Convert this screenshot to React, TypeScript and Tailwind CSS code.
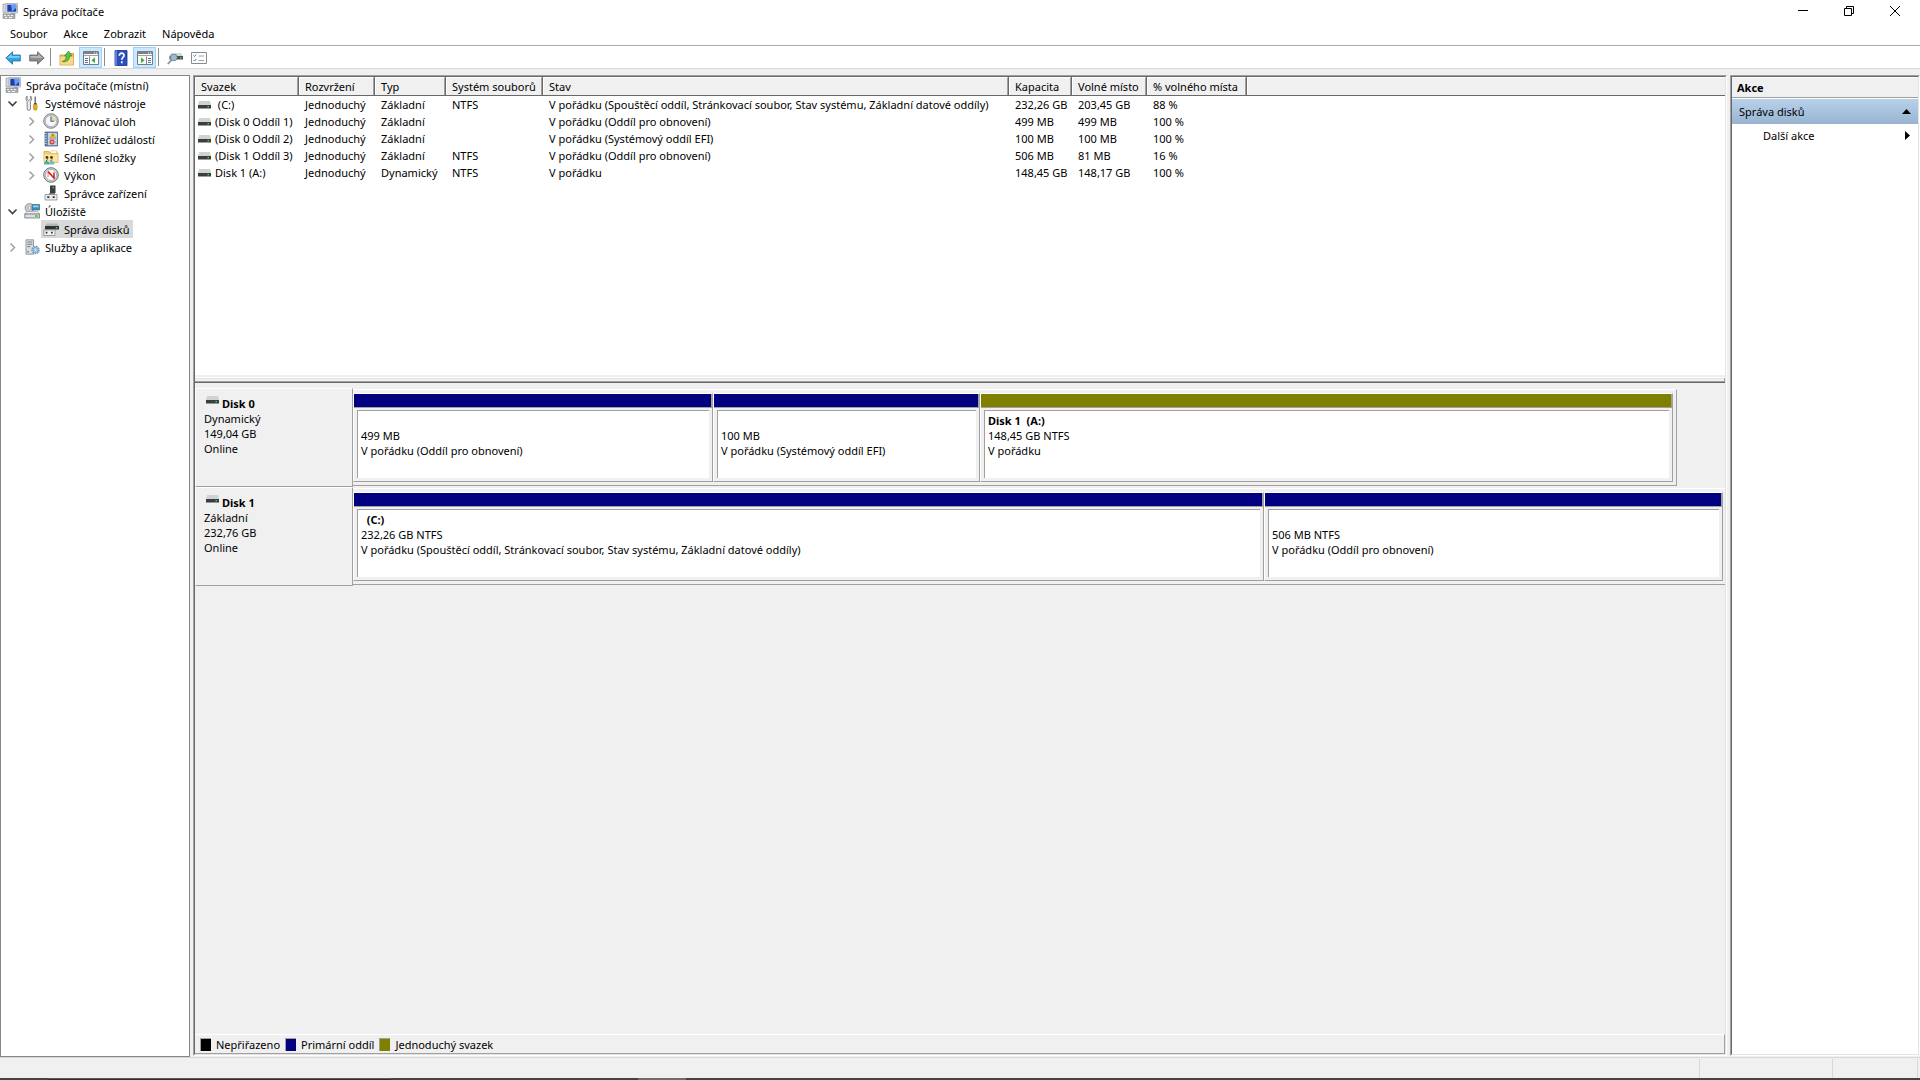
import type { ReactNode } from "react";

type IconProps = { className?: string };

const Svg = ({ children, className = "size-4" }: { children: ReactNode; className?: string }) => (
  <svg viewBox="0 0 16 16" className={`shrink-0 ${className}`} aria-hidden="true">
    {children}
  </svg>
);

const ComputerIcon = ({ className }: IconProps) => (
  <Svg className={className}>
    <path d="M1 1h3.500v9H1z" fill="#d5d8db" stroke="#8d9297" strokeWidth=".6" />
    <path d="M4 .5h11.500v9.500H4z" fill="#dfe3e6" stroke="#9aa0a6" strokeWidth=".7" />
    <path d="M5.300 1.700h9v7h-9z" fill="#1b3fae" />
    <path d="M9 1.700h5.300v3L10 8.700z" fill="#6c9bee" />
    <path d="M9 10h4v1.200H9z" fill="#a4a9ad" />
    <path d="M1 11h12v4.500H1z" fill="#a6abaf" stroke="#7d8387" strokeWidth=".5" />
    <path d="M2 12h2v1H2zM5.500 12h2v1h-2zM9 12h2v1H9zM3 14h2v1H3zM7 14h3v1H7z" fill="#f4f5f6" />
  </Svg>
);

const ToolsIcon = ({ className }: IconProps) => (
  <Svg className={className}>
    <path d="M3.200 1v3.200L4.800 5.500 6.400 4.200V1C8 1.900 8.300 4.800 6.500 6.400V14c0 1.800-3.400 1.800-3.400 0V6.400C1.200 4.800 1.600 1.900 3.200 1z" fill="#e4e6e8" stroke="#6f757a" strokeWidth=".8" />
    <path d="M10.500 1.500h1.500V8h-1.500z" fill="#73787c" />
    <path d="M10 8h2.600v1.600H10z" fill="#44484b" />
    <path d="M9.600 9.500h3.400V14c0 1.600-3.400 1.600-3.400 0z" fill="#f0b016" stroke="#ad7707" strokeWidth=".6" />
  </Svg>
);

const ClockIcon = ({ className }: IconProps) => (
  <Svg className={className}>
    <circle cx="8" cy="8" r="7.300" fill="#c7cacd" stroke="#777c80" strokeWidth=".9" />
    <circle cx="8" cy="8" r="5.600" fill="#f4f8fc" stroke="#8c9196" strokeWidth=".5" />
    <path d="M8 8V2.600a5.400 5.400 0 0 1 5.400 5.400z" fill="#eed9a6" />
    <path d="M8 3.600V8.300h3.300" fill="none" stroke="#38638f" strokeWidth="1.100" />
  </Svg>
);

const EventIcon = ({ className }: IconProps) => (
  <Svg className={className}>
    <path d="M2 1h12.500v14H2z" fill="#6484ab" stroke="#3c5675" strokeWidth=".7" />
    <path d="M5 1.800h9v12.400H5z" fill="#c4d3e6" />
    <path d="M1 2.500h2.500M1 5h2.500M1 7.500h2.500M1 10h2.500M1 12.500h2.500" stroke="#c8ced4" strokeWidth="1" />
    <path d="M9.800 2l2.900 5H6.900z" fill="#fbc61a" stroke="#b98a05" strokeWidth=".5" />
    <path d="M9.800 3.700v1.800" stroke="#4d3b05" strokeWidth=".8" />
    <circle cx="9" cy="11" r="2.500" fill="#d7423c" />
    <path d="M7.800 11h2.400" stroke="#fff" strokeWidth="1" />
    <path d="M5.500 8h8M11.800 11h2" stroke="#7593bb" strokeWidth=".6" />
  </Svg>
);

const FolderUsersIcon = ({ className }: IconProps) => (
  <Svg className={className}>
    <path d="M1 2.500h5l1 1.500h8v9.500H1z" fill="#f4cf6c" stroke="#c89b34" strokeWidth=".7" />
    <path d="M8 1.800h5.500V4.500H8z" fill="#fff" stroke="#d3b05a" strokeWidth=".5" />
    <path d="M1.300 5.500h13.500v7.800H1.300z" fill="#fbe39b" />
    <circle cx="4" cy="8.500" r="1.400" fill="#4a3728" />
    <circle cx="8.500" cy="8.500" r="1.400" fill="#4a3728" />
    <path d="M4.500 10.500L3 12M9 10.500L7.500 12" stroke="#4a3728" strokeWidth="1" />
    <path d="M1 15.500c0-5 5.500-5 5.500 0z" fill="#48b5a0" />
    <path d="M6 15.500c0-5 5.500-5 5.500 0z" fill="#6fb9dc" />
  </Svg>
);

const PerfIcon = ({ className }: IconProps) => (
  <Svg className={className}>
    <circle cx="8" cy="8" r="7.300" fill="#d4d7d9" stroke="#6c7175" strokeWidth="1" />
    <circle cx="8" cy="8" r="5.500" fill="#fff" stroke="#85898d" strokeWidth=".6" />
    <path d="M5 10V5.500L7.500 8" fill="none" stroke="#e07b7b" strokeWidth="1" />
    <path d="M5 4.500l6 6.500V5.500" fill="none" stroke="#cf1b1b" strokeWidth="1.500" />
  </Svg>
);

const DeviceIcon = ({ className }: IconProps) => (
  <Svg className={className}>
    <path d="M7 .5h5.500V8H7z" fill="#3b3e41" />
    <path d="M9.500 2H11v1.300H9.500z" fill="#3fdc3f" />
    <path d="M6 8h6v2H6z" fill="#777c80" />
    <path d="M2 9.500h12V15H2z" fill="#e9ebec" stroke="#888d91" strokeWidth=".8" />
    <path d="M4.300 11.300h2v1.700h-2zM9.700 11.300h2v1.700h-2z" fill="#2e3134" />
  </Svg>
);

const StorageIcon = ({ className }: IconProps) => (
  <Svg className={className}>
    <circle cx="5.500" cy="5" r="4.500" fill="#c8ccd0" stroke="#7e8387" strokeWidth=".7" />
    <circle cx="5.500" cy="5" r="1.400" fill="#fff" stroke="#7e8387" strokeWidth=".6" />
    <path d="M8 1.500h7.500V7H8z" fill="#2b93cc" stroke="#53606a" strokeWidth=".7" />
    <path d="M9 2.500h5.500v1.800H9z" fill="#8fd4f2" />
    <path d="M2.500 8.500h11l2 2.500H.8z" fill="#eef0f1" stroke="#8c9195" strokeWidth=".6" />
    <path d="M.8 11h14.700v4H.8z" fill="#dadddf" stroke="#5f6468" strokeWidth=".7" />
    <path d="M11 12.300h3v1.400h-3z" fill="#33c433" />
  </Svg>
);

const DiskMgmtIcon = ({ className }: IconProps) => (
  <Svg className={className}>
    <path d="M3.500 2.500h11L16 5H2z" fill="#b4b8bb" />
    <path d="M2 5h14v3.500H2z" fill="#303336" />
    <path d="M12.800 6h1.600v1.400h-1.600z" fill="#3fdc3f" />
    <path d="M.8 9H12v5.500H.8z" fill="#f1f2f3" stroke="#888d91" strokeWidth=".8" />
    <path d="M2.700 10.700h1.700v1.800H2.700zM8 10.700h1.700v1.800H8z" fill="#2e3134" />
  </Svg>
);

const ServicesIcon = ({ className }: IconProps) => (
  <Svg className={className}>
    <path d="M2 .8h7.500v14.400H2z" fill="#d9dee2" stroke="#7d858c" strokeWidth=".8" />
    <path d="M3.300 3h5M3.300 5.300h5M3.300 7.600h3" stroke="#727a81" strokeWidth="1" />
    <path d="M3.300 12h1.500v1.500H3.300z" fill="#3fae3f" />
    <circle cx="11.500" cy="11" r="3.400" fill="#dcebf7" stroke="#6d9cc4" strokeWidth="1.700" strokeDasharray="1.600 .7" />
    <circle cx="11.500" cy="11" r="2.500" fill="#c7dff2" stroke="#5f8fb8" strokeWidth=".7" />
    <circle cx="11.500" cy="11" r="1" fill="#fff" stroke="#5f8fb8" strokeWidth=".5" />
  </Svg>
);

const DriveIcon = () => (
  <svg viewBox="0 0 13 8" className="h-2 w-[13px] shrink-0" aria-hidden="true">
    <path d="M1 0h11l1 4H0z" fill="#d0d3d6" />
    <path d="M0 4h13v3.500H0z" fill="#3b3d3f" />
    <path d="M9.500 5H11v1.300H9.500z" fill="#2fe62f" />
  </svg>
);

const BackIcon = () => (
  <Svg>
    <path d="M.8 8L7.500 1.800V5H15.300v6H7.500v3.200z" fill="#2fa3e6" stroke="#1b6da5" strokeWidth=".8" />
    <path d="M2.300 8L6.700 4v2h7.800v1.700z" fill="#83cdf5" />
  </Svg>
);
const ForwardIcon = () => (
  <Svg>
    <path d="M15.200 8L8.500 1.800V5H.7v6h7.800v3.200z" fill="#8d8d8d" stroke="#5f5f5f" strokeWidth=".8" />
    <path d="M13.700 8L9.300 4v2H1.500v1.700z" fill="#b9b9b9" />
  </Svg>
);
const UpFolderIcon = () => (
  <Svg>
    <path d="M1 5h5.500l1-1.500h7V15H1z" fill="#f0c35c" stroke="#b58a2b" strokeWidth=".7" />
    <path d="M1.300 7h13v7.700h-13z" fill="#f8d985" />
    <path d="M3 11.500c3-.8 4.300-2.800 4.300-5.500H5.500L9.500 1 13 6h-2.300c0 4-3 6.500-7.700 5.500z" fill="#5cc04a" stroke="#2c7d20" strokeWidth=".6" />
  </Svg>
);
const PaneIcon = ({ flip }: { flip?: boolean }) => (
  <Svg>
    <path d="M.5 1.500h15v13H.5z" fill="#fbfbfb" stroke="#7a7d80" />
    <path d="M1 2h14v2H1z" fill="#7d8185" />
    <path d="M11 2.500h1v1h-1zM13 2.500h1v1h-1z" fill="#fff" />
    <path d="M1 5h14v1H1z" fill="#9fa3a6" />
    <g transform={flip ? "matrix(-1 0 0 1 16 0)" : undefined}>
      <path d="M6.500 6.500V14" stroke="#85898d" />
      <path d="M2 8.500h3M2 10.500h3M2 12.500h3" stroke="#55718f" />
      <path d="M12 7.500v5.400L8.500 10.200z" fill="#2fae2f" />
    </g>
  </Svg>
);
const HelpIcon = () => (
  <Svg>
    <path d="M2 .5h12v15H2z" fill="#2b50bd" stroke="#173183" strokeWidth=".8" />
    <path d="M2 .5h2v15H2z" fill="#5b7ee0" />
    <path d="M6.300 5.800c0-3.600 4.800-3.300 4.700-.3 0 2-2.200 2-2.200 4.200M8.800 11.300v1.900" fill="none" stroke="#fff" strokeWidth="1.700" />
  </Svg>
);
const RescanIcon = () => (
  <Svg>
    <path d="M4 3h10L16 6H2z" fill="#d3d6d8" />
    <path d="M2.500 6H16v3.500H2.500z" fill="#4a4d50" />
    <path d="M13 7h1.500v1.500H13z" fill="#35de35" />
    <path d="M5 9.500L.8 14" stroke="#8b9095" strokeWidth="1.800" />
    <circle cx="6.800" cy="7.500" r="3.300" fill="#9dbbd3" stroke="#71828f" strokeWidth=".9" />
  </Svg>
);
const ListIcon = () => (
  <Svg>
    <path d="M.5 2.500h15v11H.5z" fill="#fdfdfd" stroke="#8a8d90" />
    <path d="M2.500 5.500l1 1 1.700-2M2.500 10l1 1 1.700-2" fill="none" stroke="#3974b8" strokeWidth=".9" />
    <path d="M7.500 6H13M7.500 10.500H13" stroke="#a0a4a8" />
  </Svg>
);

type TreeItem = {
  label: string;
  level: number;
  icon: (p: IconProps) => ReactNode;
  state?: "open" | "closed";
  selected?: boolean;
};

const tree: TreeItem[] = [
  { label: "Správa počítače (místní)", level: 0, icon: ComputerIcon },
  { label: "Systémové nástroje", level: 1, icon: ToolsIcon, state: "open" },
  { label: "Plánovač úloh", level: 2, icon: ClockIcon, state: "closed" },
  { label: "Prohlížeč událostí", level: 2, icon: EventIcon, state: "closed" },
  { label: "Sdílené složky", level: 2, icon: FolderUsersIcon, state: "closed" },
  { label: "Výkon", level: 2, icon: PerfIcon, state: "closed" },
  { label: "Správce zařízení", level: 2, icon: DeviceIcon },
  { label: "Úložiště", level: 1, icon: StorageIcon, state: "open" },
  { label: "Správa disků", level: 2, icon: DiskMgmtIcon, selected: true },
  { label: "Služby a aplikace", level: 1, icon: ServicesIcon, state: "closed" },
];

const indents = ["pl-[2px]", "pl-[3px]", "pl-[22px]"];

const Chevron = ({ state }: { state?: "open" | "closed" }) => (
  <svg viewBox="0 0 16 16" className="size-4 shrink-0" fill="none" aria-hidden="true">
    {state === "open" && <path d="M4.500 6.500l4 4 4-4" stroke="#404040" strokeWidth="1.600" />}
    {state === "closed" && <path d="M6.500 4.500l4 4-4 4" stroke="#a0a0a0" strokeWidth="1.500" />}
  </svg>
);

const columns = [
  { label: "Svazek", width: "w-[104px]" },
  { label: "Rozvržení", width: "w-[76px]" },
  { label: "Typ", width: "w-[71px]" },
  { label: "Systém souborů", width: "w-[97px]" },
  { label: "Stav", width: "w-[466px]" },
  { label: "Kapacita", width: "w-[63px]" },
  { label: "Volné místo", width: "w-[75px]" },
  { label: "% volného místa", width: "w-[100px]" },
];

const longState = "V pořádku (Spouštěcí oddíl, Stránkovací soubor, Stav systému, Základní datové oddíly)";

const volumes = [
  ["\u00a0(C:)", "Jednoduchý", "Základní", "NTFS", longState, "232,26 GB", "203,45 GB", "88 %"],
  ["(Disk 0 Oddíl 1)", "Jednoduchý", "Základní", "", "V pořádku (Oddíl pro obnovení)", "499 MB", "499 MB", "100 %"],
  ["(Disk 0 Oddíl 2)", "Jednoduchý", "Základní", "", "V pořádku (Systémový oddíl EFI)", "100 MB", "100 MB", "100 %"],
  ["(Disk 1 Oddíl 3)", "Jednoduchý", "Základní", "NTFS", "V pořádku (Oddíl pro obnovení)", "506 MB", "81 MB", "16 %"],
  ["Disk 1 (A:)", "Jednoduchý", "Dynamický", "NTFS", "V pořádku", "148,45 GB", "148,17 GB", "100 %"],
];

type Partition = { title: string; size: string; state: string; bar: string; grow: string };
type Disk = { name: string; kind: string; size: string; frame: string; parts: Partition[] };

const disks: Disk[] = [
  {
    name: "Disk 0",
    kind: "Dynamický",
    size: "149,04 GB",
    frame: "mr-12 border-r border-r-[#a0a0a0] pr-[3px]",
    parts: [
      { title: "", size: "499 MB", state: "V pořádku (Oddíl pro obnovení)", bar: "bg-[#000080]", grow: "flex-[358]" },
      { title: "", size: "100 MB", state: "V pořádku (Systémový oddíl EFI)", bar: "bg-[#000080]", grow: "flex-[265]" },
      { title: "Disk 1\u00a0 (A:)", size: "148,45 GB NTFS", state: "V pořádku", bar: "bg-[#808000]", grow: "flex-[691]" },
    ],
  },
  {
    name: "Disk 1",
    kind: "Základní",
    size: "232,76 GB",
    frame: "pr-[2px]",
    parts: [
      { title: "\u00a0 (C:)", size: "232,26 GB NTFS", state: longState, bar: "bg-[#000080]", grow: "flex-[909]" },
      { title: "", size: "506 MB NTFS", state: "V pořádku (Oddíl pro obnovení)", bar: "bg-[#000080]", grow: "flex-[457]" },
    ],
  },
];

const legend = [
  { label: "Nepřiřazeno", color: "bg-black" },
  { label: "Primární oddíl", color: "bg-[#000080]" },
  { label: "Jednoduchý svazek", color: "bg-[#808000]" },
];

const Sunken = ({ children, className }: { children: ReactNode; className: string }) => (
  <div className={`flex border border-white border-t-[#a0a0a0] border-l-[#a0a0a0] ${className}`}>
    <div className="flex min-w-0 flex-1 flex-col border border-[#e3e3e3] border-t-[#696969] border-l-[#696969]">
      {children}
    </div>
  </div>
);

const toolButton = "flex h-[21px] w-[23px] items-center justify-center";
const toolActive = "flex h-[21px] w-[23px] items-center justify-center border border-[#99d1ff] bg-[#cce8ff]";
const Divider = () => <div className="mr-[3px] ml-px h-[18px] w-px self-center bg-[#8d8d8d]" />;

export default function App() {
  return (
    <div className="flex h-screen flex-col overflow-hidden bg-[#f0f0f0] font-['Noto_Sans',sans-serif] text-[11px] leading-[15px] text-black">
      <header className="bg-white">
        <div className="flex h-[22px] items-center pr-[2px]">
          <ComputerIcon className="ml-0.5 size-4" />
          <h1 className="ml-[5px] flex-1">Správa počítače</h1>
          <button aria-label="Minimalizovat" className="flex w-[46px] justify-center">
            <svg viewBox="0 0 10 10" className="size-2.5"><path d="M0 4.500h10" stroke="#000" /></svg>
          </button>
          <button aria-label="Obnovit" className="flex w-[46px] justify-center">
            <svg viewBox="0 0 10 10" className="size-2.5" fill="none" stroke="#000"><path d="M.5 2.500h7v7h-7zM2.500 2.500v-2h7v7h-2" /></svg>
          </button>
          <button aria-label="Zavřít" className="flex w-[46px] justify-center">
            <svg viewBox="0 0 10 10" className="size-2.5" stroke="#000"><path d="M0 0l10 10M10 0L0 10" /></svg>
          </button>
        </div>
        <nav className="flex h-6 items-center gap-4 border-b border-[#a9abb0] pl-2.5">
          <button>Soubor</button>
          <button>Akce</button>
          <button>Zobrazit</button>
          <button>Nápověda</button>
        </nav>
        <div className="flex h-[23px] items-end gap-px border-b border-[#d9d9d9] pl-px">
          <button aria-label="Zpět" className={toolButton}><BackIcon /></button>
          <button aria-label="Vpřed" className={toolButton}><ForwardIcon /></button>
          <Divider />
          <button aria-label="O úroveň výš" className={toolButton}><UpFolderIcon /></button>
          <button aria-label="Strom konzoly" className={toolActive}><PaneIcon /></button>
          <Divider />
          <button aria-label="Nápověda k programu" className={toolButton}><HelpIcon /></button>
          <button aria-label="Podokno akcí" className={toolActive}><PaneIcon flip /></button>
          <Divider />
          <button aria-label="Znovu prohledat disky" className={toolButton}><RescanIcon /></button>
          <button aria-label="Vlastnosti" className={toolButton}><ListIcon /></button>
        </div>
      </header>

      <div className="flex min-h-0 flex-1 gap-[3px] pt-1.5">
        <aside className="w-[190px] shrink-0 border border-[#828790] bg-white">
          <ul>
            {tree.map((item) => (
              <li key={item.label} className={`flex h-[18px] items-center ${indents[item.level]}`}>
                {item.level > 0 && <Chevron state={item.state} />}
                <button
                  aria-current={item.selected}
                  className={`flex h-[18px] items-center gap-[5px] pr-1 pl-[2px] whitespace-nowrap ${item.level > 0 ? "ml-[2px]" : ""} ${item.selected ? "bg-[#d9d9d9]" : ""}`}
                >
                  <item.icon />
                  {item.label}
                </button>
              </li>
            ))}
          </ul>
        </aside>

        <Sunken className="mb-px min-w-0 flex-1">
          <div className="h-[298px] shrink-0 overflow-hidden bg-white">
            <table className="w-full table-fixed border-separate border-spacing-0 text-left whitespace-nowrap">
              <thead>
                <tr>
                  {columns.map((c) => (
                    <th key={c.label} className={`h-[19px] border-r border-b border-[#696969] bg-[#f0f0f0] p-0 font-normal ${c.width}`}>
                      <div className="h-[18px] border-t border-r border-l border-white border-r-[#a0a0a0] pl-[5px] leading-[17px]">{c.label}</div>
                    </th>
                  ))}
                  <th aria-label="Prázdný sloupec" className="border-b border-[#696969] bg-[#f0f0f0] p-0">
                    <div className="h-[18px] border-t border-l border-white" />
                  </th>
                </tr>
              </thead>
              <tbody>
                {volumes.map((row) => (
                  <tr key={row[0]}>
                    {row.map((cell, i) => (
                      <td key={columns[i].label} className={`h-[17px] p-0 leading-[17px] ${i === 0 ? "pl-[3px]" : "pl-1.5"}`}>
                        {i === 0 ? (
                          <div className="flex items-center gap-1"><DriveIcon />{cell}</div>
                        ) : cell}
                      </td>
                    ))}
                    <td />
                  </tr>
                ))}
              </tbody>
            </table>
          </div>
          <div className="mt-[2px] h-1.5 shrink-0 border-t border-b border-white border-b-[#696969]">
            <div className="h-1 border border-l-0 border-[#a0a0a0] border-t-[#e3e3e3]" />
          </div>

          <section className="min-h-0 flex-1 overflow-hidden pt-[5px]">
            {disks.map((disk) => (
              <div key={disk.name} className="flex h-[99px]">
                <div className="w-[158px] shrink-0 border border-white border-r-[#a0a0a0] border-b-[#a0a0a0] pt-[7px] pl-2">
                  <h2 className="flex gap-[3px] pl-[2px] font-bold"><DriveIcon />{disk.name}</h2>
                  <p>{disk.kind}</p>
                  <p>{disk.size}</p>
                  <p>Online</p>
                </div>
                <div className={`mt-px mb-px flex min-w-0 flex-1 border-t border-b border-t-white border-b-[#a0a0a0] py-[3px] ${disk.frame}`}>
                  {disk.parts.map((p) => (
                    <div key={p.size} className={`flex min-w-0 flex-col border border-white border-r-[#a0a0a0] border-b-[#a0a0a0] ${p.grow}`}>
                      <div className={`h-3.5 shrink-0 border-r border-b border-[#a0a0a0] ${p.bar}`} />
                      <div className="mx-[3px] mt-[2px] mb-[3px] flex-1 overflow-hidden border-t border-l border-[#a0a0a0] bg-white pt-[2px] pl-[3px] whitespace-nowrap">
                        <p className="h-[15px] font-bold">{p.title}</p>
                        <p>{p.size}</p>
                        <p>{p.state}</p>
                      </div>
                    </div>
                  ))}
                </div>
              </div>
            ))}
          </section>

          <ul className="flex h-5 shrink-0 items-center gap-[5px] border-t border-r border-b border-[#a0a0a0] border-t-white pl-[5px]">
            {legend.map((l) => (
              <li key={l.label} className="flex items-center gap-[5px]">
                <span className={`h-[13px] w-[11px] border-t border-l border-[#a0a0a0] ${l.color}`} />
                {l.label}
              </li>
            ))}
          </ul>
        </Sunken>

        <Sunken className="mb-px w-[190px] shrink-0 bg-white">
          <h2 className="h-[21px] border-t border-b border-white border-b-[#a0a0a0] bg-[#f0f0f0] pl-[5px] leading-[19px] font-bold">Akce</h2>
          <button className="mt-px flex h-[25px] items-center justify-between bg-linear-to-b from-[#b9d1ea] to-[#98b4d2] pr-[7px] pl-[7px]">
            Správa disků
            <svg viewBox="0 0 9 5" className="h-[5px] w-[9px]"><path d="M0 5L4.500 0 9 5z" /></svg>
          </button>
          <button className="flex h-[23px] items-center justify-between pr-2 pl-[31px]">
            Další akce
            <svg viewBox="0 0 5 9" className="h-[9px] w-[5px]"><path d="M0 0l5 4.500L0 9z" /></svg>
          </button>
        </Sunken>
      </div>

      <footer className="flex h-[21px] shrink-0 border-t border-[#d7d7d7] pt-px pr-[2px]">
        <div className="flex-1 border-r border-[#d7d7d7]" />
        <div className="w-[133px] border-r border-[#d7d7d7]" />
        <div className="w-[85px] border-r border-[#d7d7d7]" />
      </footer>
      <div className="flex h-0.5 shrink-0 bg-[#434346]">
        <div className="ml-12 h-0.5 w-[343px] border-t border-[#5a5a5d] bg-[#2f2f32]" />
        <div className="ml-[247px] h-0.5 w-12 bg-[#6d6d6d]" />
      </div>
    </div>
  );
}
